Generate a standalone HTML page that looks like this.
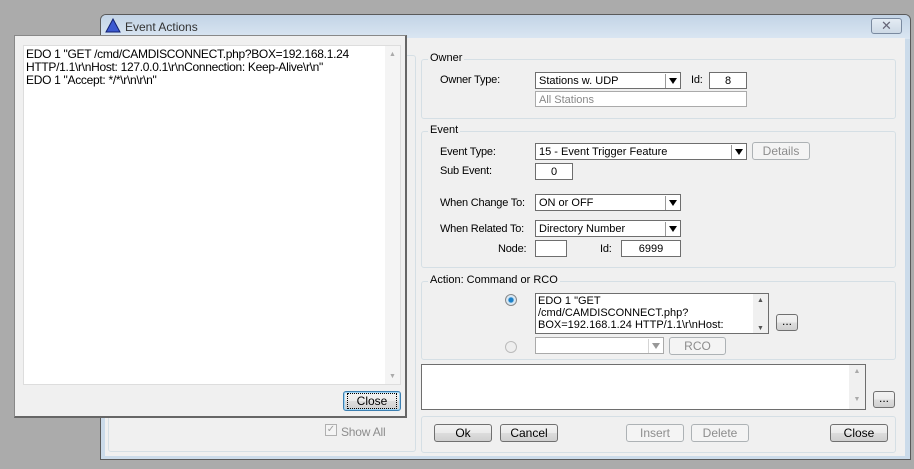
<!DOCTYPE html>
<html><head><style>
*{box-sizing:border-box;margin:0;padding:0}
body{width:914px;height:469px;background:#ababab;position:relative;overflow:hidden;font-family:"Liberation Sans",sans-serif;font-size:11px;color:#000}
.a{position:absolute}
.grp{position:absolute;border:1px solid #d5dfe5;border-radius:3px}
.lg{position:absolute;background:#f0f0f0;padding:0 2px;top:-8px;left:6px}
.lbl{position:absolute;font-size:11px;letter-spacing:-0.2px;margin-top:1px}
.inp{position:absolute;background:#fff;border:1px solid #6e6e6e;font-size:11px;padding:2px 3px 0;white-space:nowrap;overflow:hidden;line-height:13px}
.dd{position:absolute;width:14px;height:14px;right:1px;top:1px;border-left:1px solid #999;background:#fff}
.dd:after{content:"";position:absolute;left:3px;top:4px;border-left:4px solid transparent;border-right:4px solid transparent;border-top:6px solid #000}
.btn{position:absolute;border:1px solid #707070;border-radius:3px;background:linear-gradient(#f2f2f2,#ebebeb 50%,#dddddd 51%,#cfcfcf);text-align:center;font-size:12px;line-height:16px}
.dis{border-color:#adb2b5;color:#8d8d8d;background:#f4f4f4}
</style></head><body>
<!-- main window -->
<div class="a" style="left:100px;top:14px;width:811px;height:446px;background:#cbdbea;border:1px solid #5a5a5a;border-radius:6px 6px 0 0"></div>
<div class="a" style="left:101px;top:15px;width:809px;height:24px;background:linear-gradient(#c3d4e6,#dae6f2);border-radius:5px 5px 0 0"></div>
<svg class="a" style="left:105px;top:18px" width="16" height="16"><polygon points="8,1 15,14 1,14" fill="#3b59d0" stroke="#102070"/></svg>
<div class="a" style="left:125px;top:20px;font-size:12px;color:#333">Event Actions</div>
<div class="a" style="left:871px;top:18px;width:31px;height:16px;border:1px solid #7a8aa0;border-radius:3px;background:linear-gradient(#e4ecf4,#cdd9e6);text-align:center;font-size:13px;line-height:14px;color:#667">✕</div>
<div class="a" style="left:105px;top:38px;width:800px;height:418px;background:#f0f0f0"></div>
<div class="grp" style="left:108px;top:55px;width:308px;height:397px;border-color:#d5dfe5"></div>
<div class="a" style="left:325px;top:424px;width:12px;height:12px;border:1px solid #b0b0b0;background:#f4f4f4;color:#a0a0a0;font-size:10px;line-height:10px;text-align:center">✓</div>
<div class="lbl" style="left:341px;top:424px;color:#8d8d8d;font-size:12px">Show All</div>

<!-- Owner -->
<div class="grp" style="left:421px;top:59px;width:475px;height:60px"><span class="lg">Owner</span></div>
<div class="lbl" style="left:440px;top:73px">Owner Type:</div>
<div class="inp" style="left:535px;top:72px;width:146px;height:17px">Stations w. UDP<span class="dd"></span></div>
<div class="lbl" style="left:691px;top:73px">Id:</div>
<div class="inp" style="left:709px;top:72px;width:38px;height:17px;text-align:center">8</div>
<div class="inp" style="left:535px;top:91px;width:212px;height:16px;border-color:#aaa;color:#888">All Stations</div>

<!-- Event -->
<div class="grp" style="left:421px;top:131px;width:475px;height:137px"><span class="lg">Event</span></div>
<div class="lbl" style="left:440px;top:145px">Event Type:</div>
<div class="inp" style="left:535px;top:143px;width:212px;height:17px">15 - Event Trigger Feature<span class="dd"></span></div>
<div class="btn dis" style="left:752px;top:142px;width:58px;height:18px">Details</div>
<div class="lbl" style="left:440px;top:164px">Sub Event:</div>
<div class="inp" style="left:535px;top:163px;width:38px;height:17px;text-align:center">0</div>
<div class="lbl" style="left:440px;top:196px">When Change To:</div>
<div class="inp" style="left:535px;top:194px;width:146px;height:17px">ON or OFF<span class="dd"></span></div>
<div class="lbl" style="left:440px;top:222px">When Related To:</div>
<div class="inp" style="left:535px;top:220px;width:146px;height:17px">Directory Number<span class="dd"></span></div>
<div class="lbl" style="left:498px;top:242px">Node:</div>
<div class="inp" style="left:535px;top:240px;width:32px;height:17px"></div>
<div class="lbl" style="left:600px;top:242px">Id:</div>
<div class="inp" style="left:621px;top:240px;width:60px;height:17px;text-align:center">6999</div>

<!-- Action -->
<div class="grp" style="left:421px;top:281px;width:475px;height:79px"><span class="lg">Action: Command or RCO</span></div>
<div class="a" style="left:505px;top:294px;width:12px;height:12px;border-radius:50%;border:1px solid #888;background:radial-gradient(#1c80c8 30%,#d8e8f4 45%)"></div>
<div class="inp" style="left:535px;top:293px;width:234px;height:41px;white-space:normal;line-height:12px;padding:1px 18px 0 2px">EDO 1 "GET /cmd/CAMDISCONNECT.php? BOX=192.168.1.24 HTTP/1.1\r\nHost:</div>
<div class="a" style="left:753px;top:294px;width:15px;height:39px;background:#f0f0f0;font-size:7px;color:#555;text-align:center;line-height:14px">▲<br><br>▼</div>
<div class="btn" style="left:776px;top:314px;width:22px;height:17px;line-height:12px">...</div>
<div class="a" style="left:505px;top:341px;width:12px;height:12px;border-radius:50%;border:1px solid #bbb;background:#eee"></div>
<div class="inp" style="left:535px;top:337px;width:129px;height:17px;border-color:#aaa"><span class="dd" style="opacity:.4"></span></div>
<div class="btn dis" style="left:669px;top:337px;width:57px;height:18px">RCO</div>

<div class="inp" style="left:421px;top:364px;width:445px;height:46px"></div>
<div class="a" style="left:849px;top:365px;width:16px;height:44px;background:#f0f0f0;font-size:7px;color:#aaa;text-align:center;line-height:14px">▲<br><br>▼</div>
<div class="btn" style="left:873px;top:391px;width:22px;height:17px;line-height:12px">...</div>

<div class="grp" style="left:421px;top:416px;width:475px;height:37px"></div>
<div class="btn" style="left:434px;top:424px;width:58px;height:18px">Ok</div>
<div class="btn" style="left:500px;top:424px;width:58px;height:18px">Cancel</div>
<div class="btn dis" style="left:626px;top:424px;width:58px;height:18px">Insert</div>
<div class="btn dis" style="left:691px;top:424px;width:58px;height:18px">Delete</div>
<div class="btn" style="left:830px;top:424px;width:58px;height:18px">Close</div>

<!-- popup -->
<div class="a" style="left:14px;top:35px;width:393px;height:383px;background:#f0f0f0;border:1px solid #888;border-right:2px solid #666;border-bottom:2px solid #666"></div>
<div class="a" style="left:23px;top:45px;width:378px;height:340px;background:#fff;border:1px solid #ddd;font-size:12px;line-height:13px;padding:2px 0 0 2px;letter-spacing:-0.3px">EDO 1 "GET /cmd/CAMDISCONNECT.php?BOX=192.168.1.24<br>HTTP/1.1\r\nHost: 127.0.0.1\r\nConnection: Keep-Alive\r\n"<br>EDO 1 "Accept: */*\r\n\r\n"</div>
<div class="a" style="left:385px;top:46px;width:15px;height:338px;background:#f4f4f4;font-size:7px;color:#aaa;text-align:center"><div style="margin-top:5px">▲</div><div style="position:absolute;bottom:4px;width:15px">▼</div></div>
<div class="btn" style="left:343px;top:391px;width:58px;height:20px;border-color:#3c7fb1;box-shadow:inset 0 0 0 1px #9fd5f5;line-height:18px"><span style="outline:1px dotted #000;padding:0 9px">Close</span></div>
</body></html>
